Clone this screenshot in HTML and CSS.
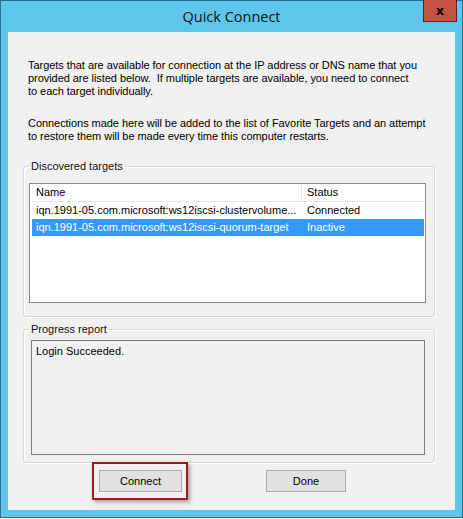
FILE: index.html
```html
<!DOCTYPE html>
<html lang="en">
<head>
    <meta charset="UTF-8">
    <title>Quick Connect</title>
    <link rel="stylesheet" href="styles.css">
</head>
<body>

    <!-- 창 전체 -->
    <div class="window">

        <!-- 제목 표시줄 -->
        <div class="titlebar">
            <span></span>
            <span class="title">Quick Connect</span>
            <button class="close-btn">x</button>
        </div>

        <!-- 본문 -->
        <div class="client">
            <p class="intro">
                Targets that are available for connection at the IP address or DNS name that you<br>
                provided are listed below.&nbsp; If multiple targets are available, you need to connect<br>
                to each target individually.
            </p>
            <p class="intro second">
                Connections made here will be added to the list of Favorite Targets and an attempt<br>
                to restore them will be made every time this computer restarts.
            </p>

            <fieldset class="group targets">
                <legend>Discovered targets</legend>
                <div class="listbox">
                    <div class="list-row list-head">
                        <span class="col-name">Name</span>
                        <span class="col-status">Status</span>
                    </div>
                    <div class="list-row">
                        <span class="col-name">iqn.1991-05.com.microsoft:ws12iscsi-clustervolume...</span>
                        <span class="col-status">Connected</span>
                    </div>
                    <div class="list-row selected">
                        <span class="col-name">iqn.1991-05.com.microsoft:ws12iscsi-quorum-target</span>
                        <span class="col-status">Inactive</span>
                    </div>
                </div>
            </fieldset>

            <fieldset class="group progress">
                <legend>Progress report</legend>
                <div class="report">Login Succeeded.</div>
            </fieldset>

            <!-- 버튼 영역 -->
            <div class="footer">
                <div class="btn-wrap">
                    <button class="btn connect">Connect</button>
                    <span class="callout"></span>
                </div>
                <button class="btn done">Done</button>
            </div>
        </div>
    </div>

</body>
</html>
```

FILE: styles.css
```css
body {
    margin: 0;
    padding: 0;
    background: #ffffff;
    font-family: 'Liberation Sans', Arial, sans-serif;
    font-size: 11px;
    color: #000;
}

.window {
    width: 463px;
    height: 518px;
    box-sizing: border-box;
    border: 1px solid #2d6e8c;
    background-color: #5ec6ea;
    display: flex;
    flex-direction: column;
}

.titlebar {
    height: 31px;
    display: grid;
    grid-template-columns: 40px 1fr 40px;
    align-items: start;
}

.title {
    text-align: center;
    font-family: 'Open Sans', sans-serif;
    font-size: 14.5px;
    line-height: 32px;
    color: #111;
}

.close-btn {
    width: 34px;
    height: 22px;
    margin-top: -1px;
    justify-self: end;
    margin-right: 5px;
    background-color: #c75048;
    border: 1px solid #5b2320;
    border-top: none;
    color: #000;
    font-family: 'DejaVu Sans', sans-serif;
    font-weight: bold;
    font-size: 13px;
    line-height: 18px;
    padding: 0;
}

.client {
    flex: 1;
    margin: 0 7px 7px 7px;
    background-color: #f0f0f0;
    padding: 27px 0 0 0;
    display: flex;
    flex-direction: column;
}

.intro {
    margin: 0 0 0 20px;
    line-height: 13px;
    white-space: nowrap;
    letter-spacing: -0.05px;
}

.intro.second {
    margin-top: 19px;
}

.group {
    margin: 0 20px 0 15px;
    padding: 0;
    border: 1px solid #d8d8d8;
    border-radius: 3px;
    box-shadow: inset 1px 1px 0 #fff, 1px 1px 0 #fff;
}

.group legend {
    margin-left: 5px;
    padding: 0 2px;
    line-height: 13px;
    color: #111;
}

.targets {
    margin-top: 17px;
    height: 157px;
    box-sizing: border-box;
}

.listbox {
    margin: 10px 8px 0 5px;
    height: 120px;
    box-sizing: border-box;
    border: 1px solid #828790;
    background: #fff;
    padding: 0 1px 0 2px;
}

.list-row {
    display: flex;
    height: 17px;
    line-height: 17px;
    white-space: nowrap;
}

.list-head {
    border-bottom: 1px solid #e5e5e5;
}

.list-head .col-name {
    border-right: 1px solid #e5e5e5;
}

.col-name {
    width: 270px;
    flex-shrink: 0;
    box-sizing: border-box;
    padding-left: 4px;
    overflow: hidden;
}

.col-status {
    padding-left: 5px;
}

.list-row.selected {
    background-color: #3399ff;
    color: #fff;
}

.progress {
    margin-top: 6px;
    height: 140px;
    box-sizing: border-box;
}

.report {
    margin: 4px 9px 0 7px;
    height: 115px;
    box-sizing: border-box;
    border: 1px solid #7f7f7f;
    padding: 4px 4px;
    line-height: 13px;
}

.footer {
    display: flex;
    align-items: flex-start;
    padding: 7px 0 0 91px;
}

.btn {
    height: 22px;
    background-color: #e1e1e1;
    border: 1px solid #adadad;
    font-family: 'Liberation Sans', Arial, sans-serif;
    font-size: 11px;
    color: #000;
    padding: 0;
}

.connect {
    width: 83px;
}

.done {
    width: 80px;
    margin-left: 84px;
}

.btn-wrap {
    position: relative;
    display: flex;
}

/* 강조 표시 박스 */
.callout {
    position: absolute;
    top: -8px;
    left: -7px;
    right: -6px;
    bottom: -8px;
    border: 2px solid #a3161d;
    box-shadow: 2px 2px 4px rgba(0, 0, 0, 0.35);
}
```
